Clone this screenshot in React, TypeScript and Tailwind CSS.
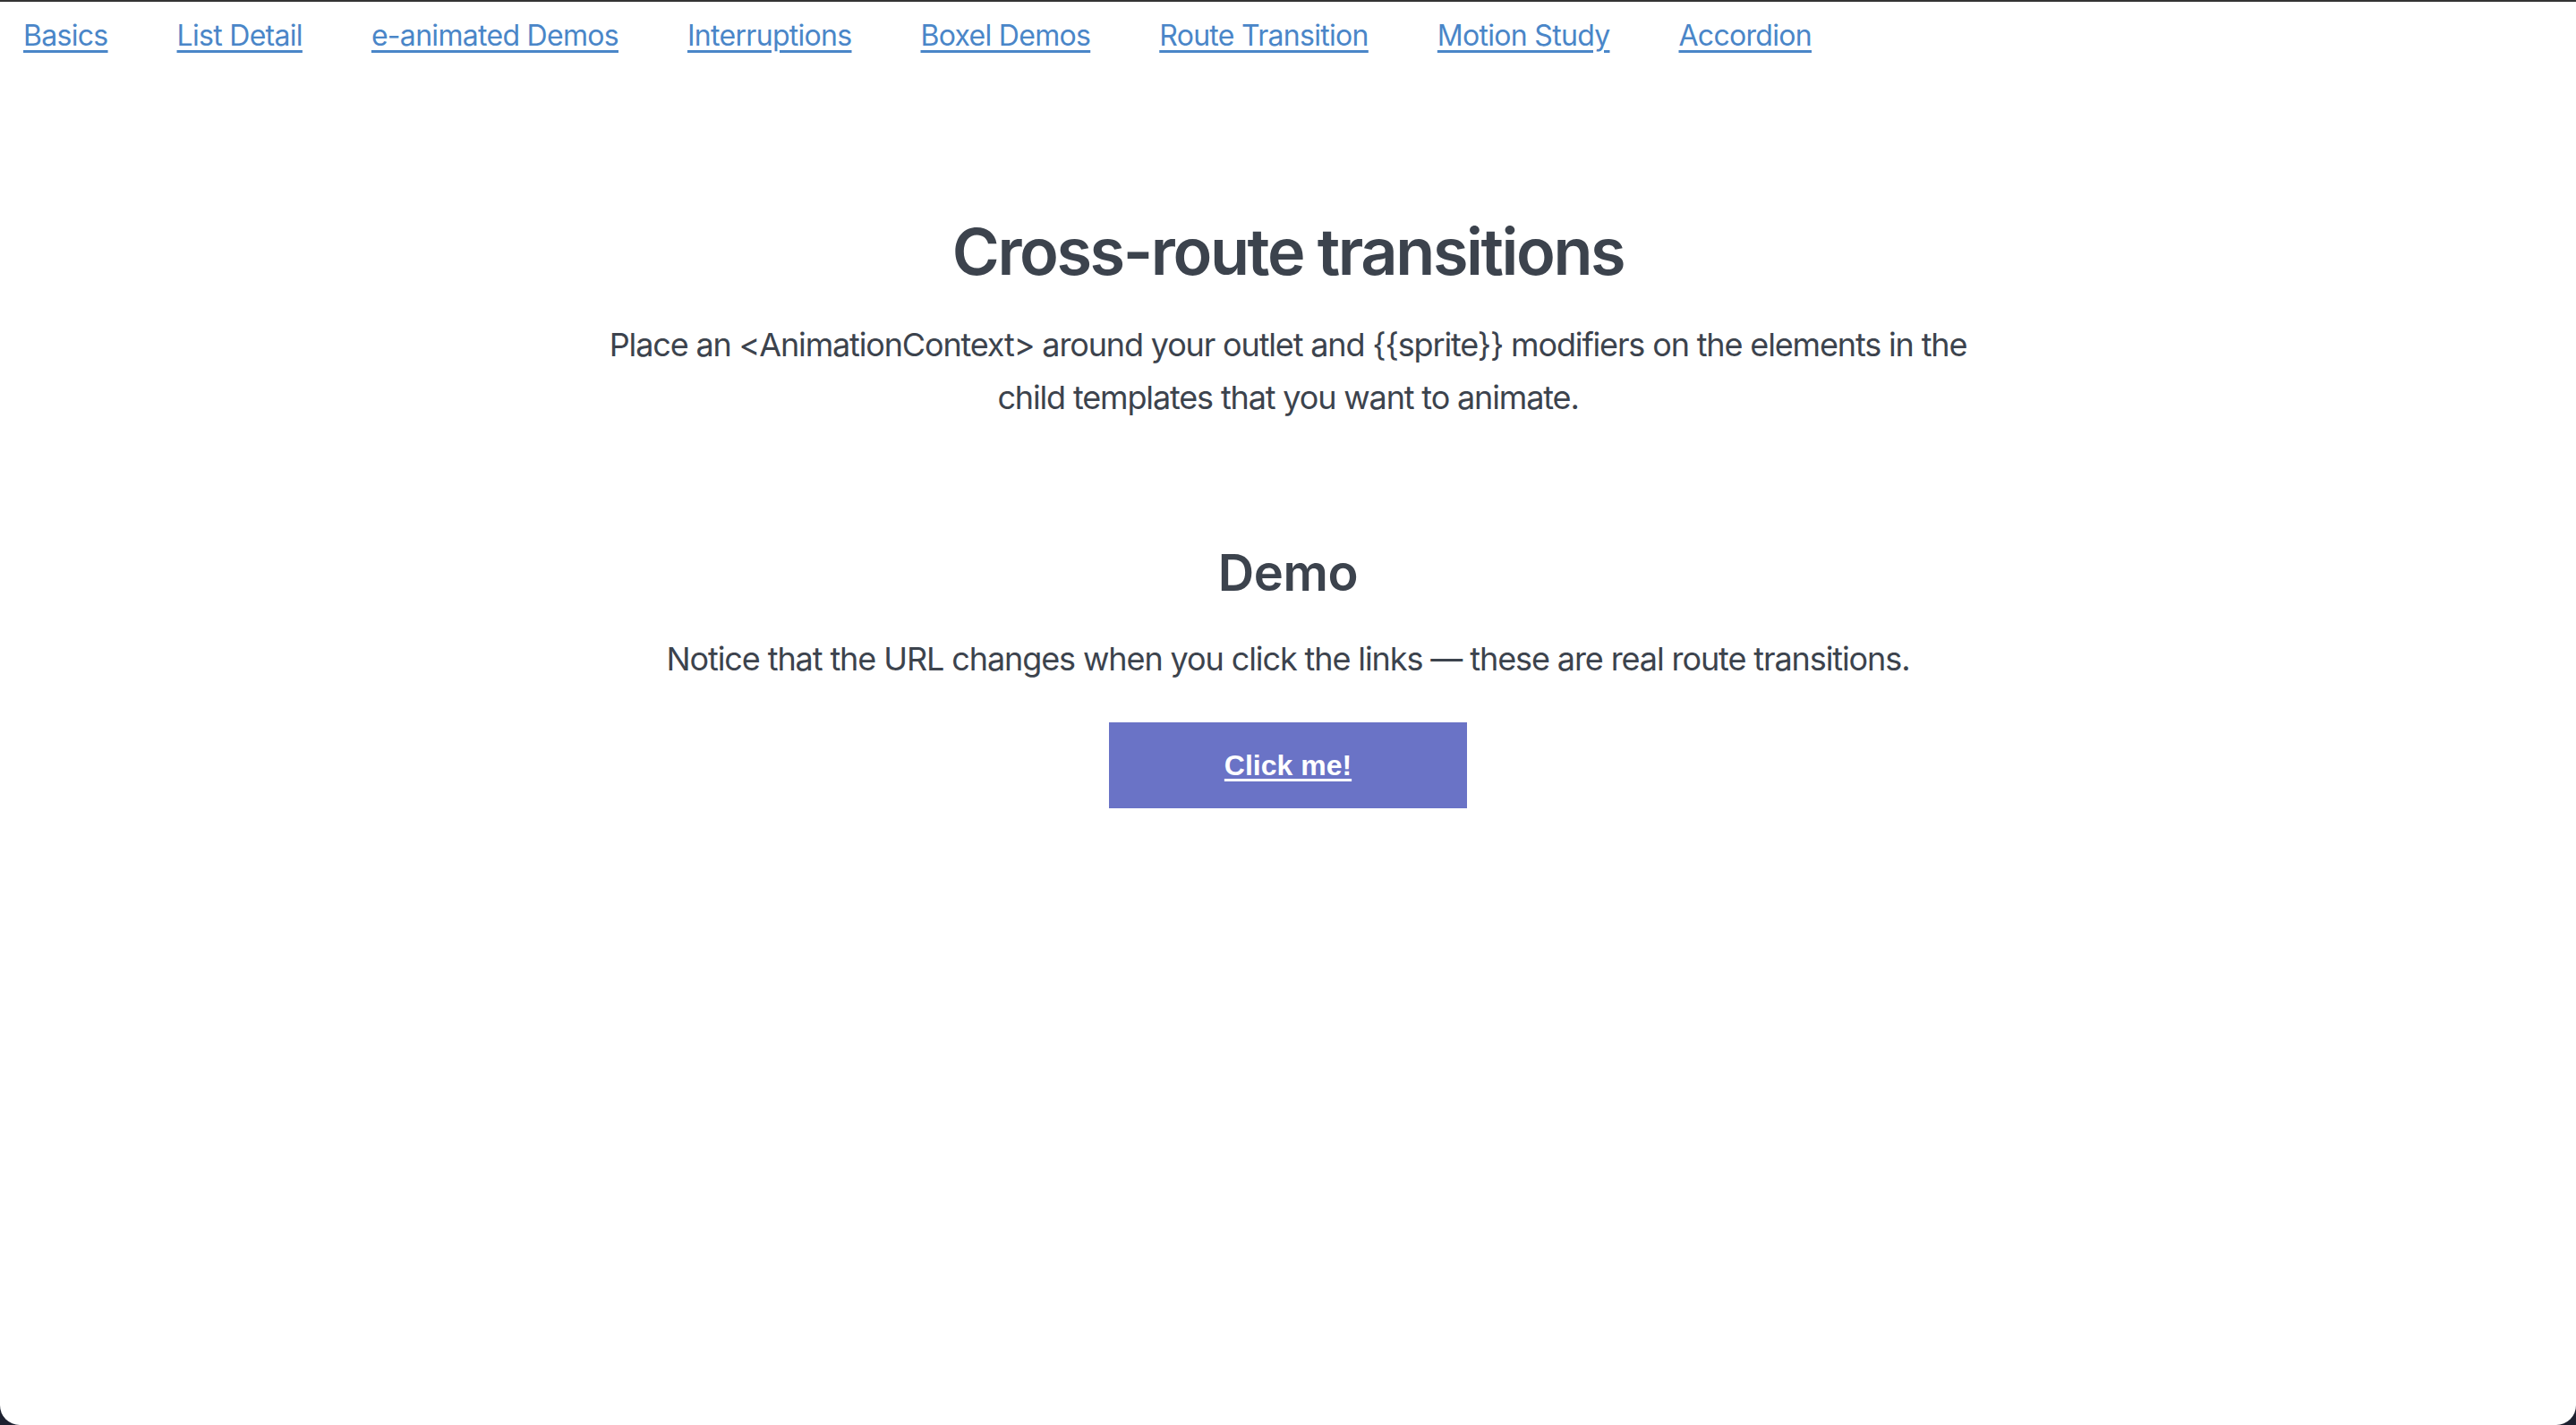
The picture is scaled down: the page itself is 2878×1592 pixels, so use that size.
const links = [
  'Basics',
  'List Detail',
  'e-animated Demos',
  'Interruptions',
  'Boxel Demos',
  'Route Transition',
  'Motion Study',
  'Accordion',
];

const intro =
  'Place an <AnimationContext> around your outlet and {{sprite}} modifiers on the elements in the child templates that you want to animate.';

export default function App() {
  return (
    <div className="h-[1592px] w-full bg-[#1d2130] overflow-hidden" style={{ fontFamily: 'Inter, "Noto Sans", sans-serif' }}>
      <div className="h-full bg-white border-t-[2px] border-[#343434] rounded-b-[22px] flex flex-col">
        {/* top nav */}
        <nav className="flex gap-[77px] pl-[26px] pt-[14px]">
          {links.map((l) => (
            <a
              key={l}
              href="#"
              className="text-[32px] tracking-[-0.7px] text-[#4a86c8] underline underline-offset-[5px] decoration-[3px]"
            >
              {l}
            </a>
          ))}
        </nav>

        <main className="flex flex-col items-center text-[#3c434d]">
          <h1 className="mt-[174px] text-[72px] font-semibold leading-[1.2] tracking-[-2.4px]">
            Cross-route transitions
          </h1>
          <p className="mt-[32px] max-w-[1560px] text-center text-[36px] leading-[1.625] tracking-[-1.15px]">
            {intro}
          </p>

          <h2 className="mt-[134px] text-[56px] font-semibold leading-[1.2] tracking-[-0.4px]">Demo</h2>
          <p className="mt-[32px] text-center text-[36px] leading-[1.625] tracking-[-1.1px]">
            Notice that the URL changes when you click the links — these are real route transitions.
          </p>

          <button
            type="button"
            className="mt-[42px] w-[400px] h-[96px] bg-[#6a73c6] flex items-center justify-center"
          >
            <span
              className="text-white text-[32px] font-bold underline underline-offset-[4px] decoration-[3px]"
              style={{ fontFamily: '"Liberation Sans", Arial, sans-serif' }}
            >
              Click me!
            </span>
          </button>
        </main>
      </div>
    </div>
  );
}
